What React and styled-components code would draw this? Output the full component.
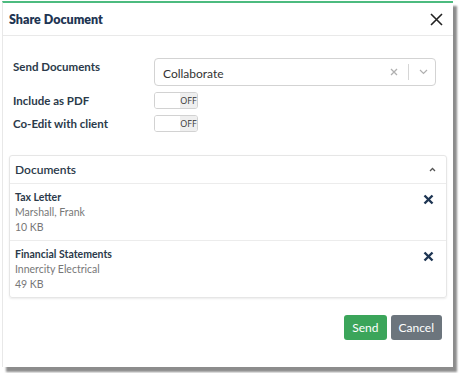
import React from 'react';
import styled, { createGlobalStyle } from 'styled-components';

const GlobalStyle = createGlobalStyle`
  html, body {
    margin: 0;
    padding: 0;
    background: #ffffff;
  }
  body {
    font-family: Lato, "Open Sans", "Liberation Sans", sans-serif;
    color: #2b3a4a;
  }
`;

const Page = styled.div`
  width: 468px;
  height: 373px;
  padding: 1px 0 0 2px;
  box-sizing: border-box;
`;

const Dialog = styled.div`
  width: 451px;
  height: 366px;
  box-sizing: border-box;
  background: #fff;
  border-top: 2px solid #4cbb7f;
  border-left: 1px solid #e8e8e8;
  box-shadow: 4px 5px 2px rgba(0, 0, 0, 0.45);
  display: flex;
  flex-direction: column;
`;

const Header = styled.div`
  height: 32px;
  display: flex;
  align-items: center;
  justify-content: space-between;
  padding: 0 10px 0 6px;
  border-bottom: 1px solid #e9e9e9;
`;

const Title = styled.h1`
  margin: 0;
  font-size: 12.5px;
  font-weight: 800;
  color: #1e3553;
`;

const CloseButton = styled.button`
  border: 0;
  background: none;
  padding: 0;
  width: 14px;
  height: 14px;
  display: flex;
  align-items: center;
  justify-content: center;
  color: #222;
`;

const Body = styled.div`
  flex: 1;
  display: flex;
  flex-direction: column;
  padding: 21px 5px 0 5px;
`;

const Form = styled.div`
  display: grid;
  grid-template-columns: 141px 282px;
  row-gap: 6px;
  padding-left: 5px;
`;

const Label = styled.div`
  font-size: 11.5px;
  font-weight: 700;
  color: #2b3a4a;
  align-self: ${p => (p.$top ? 'start' : 'center')};
  padding-top: ${p => (p.$top ? '3px' : '0')};
`;

const Select = styled.div`
  height: 28px;
  box-sizing: border-box;
  border: 1px solid #d3d3d3;
  border-radius: 4px;
  display: flex;
  align-items: center;
  padding-left: 8px;
  margin-top: 1px;
`;

const SelectValue = styled.span`
  flex: 1;
  font-size: 12px;
  color: #333;
  padding-top: 2px;
`;

const Indicators = styled.div`
  display: flex;
  align-items: center;
  height: 100%;
`;

const ClearIcon = styled.span`
  width: 20px;
  display: flex;
  justify-content: center;
  color: #b0b0b0;
`;

const Divider = styled.span`
  width: 1px;
  height: 16px;
  background: #d6d6d6;
  margin: 0 4px;
`;

const Chevron = styled.span`
  width: 20px;
  display: flex;
  justify-content: center;
  color: #b0b0b0;
  margin-right: 2px;
`;

const Toggle = styled.div`
  width: 44px;
  height: 17px;
  box-sizing: border-box;
  border: 1px solid #d2d2d2;
  border-radius: 3px;
  display: flex;
  overflow: hidden;
`;

const Knob = styled.span`
  width: 25px;
  background: #fff;
`;

const ToggleText = styled.span`
  flex: 1;
  background: #efefef;
  font-size: 9px;
  font-family: "Open Sans", "Liberation Sans", sans-serif;
  color: #333;
  display: flex;
  align-items: center;
  justify-content: center;
`;

const Card = styled.div`
  margin: 23px 1px 0 1px;
  border: 1px solid #e6e6e6;
  border-radius: 3px;
  box-shadow: 0 1px 2px rgba(0, 0, 0, 0.08);
`;

const CardHeader = styled.div`
  height: 27px;
  display: flex;
  align-items: center;
  justify-content: space-between;
  padding: 0 10px 0 5px;
  border-bottom: 1px solid #ececec;
  font-size: 12px;
  font-weight: 600;
  color: #2b3a4a;
`;

const Caret = styled.span`
  display: flex;
  color: #555;
`;

const Item = styled.div`
  display: flex;
  justify-content: space-between;
  padding: 6px 12px 5px 5px;
  border-top: ${p => (p.$first ? 'none' : '1px solid #ececec')};
`;

const ItemText = styled.div`
  display: flex;
  flex-direction: column;
  font-size: 10.5px;
  line-height: 15px;
`;

const ItemName = styled.span`
  font-weight: 700;
  color: #2b3a4a;
`;

const ItemMeta = styled.span`
  color: #777;
`;

const RemoveButton = styled.button`
  border: 0;
  background: none;
  padding: 0;
  margin-top: 4px;
  width: 11px;
  height: 11px;
  display: flex;
  color: #1e3553;
`;

const Footer = styled.div`
  display: flex;
  justify-content: flex-end;
  gap: 4px;
  padding: 17px 6px 0 0;
`;

const Button = styled.button`
  height: 25px;
  border: 0;
  border-radius: 3px;
  padding: 0 8px;
  font-family: Lato, "Open Sans", "Liberation Sans", sans-serif;
  font-size: 12px;
  color: #fff;
  background: ${p => (p.$variant === 'primary' ? '#3ba55a' : '#6c757d')};
`;

const docs = [
  { name: 'Tax Letter', client: 'Marshall, Frank', size: '10 KB' },
  { name: 'Financial Statements', client: 'Innercity Electrical', size: '49 KB' },
];

function OffToggle() {
  return (
    <Toggle>
      <Knob />
      <ToggleText>OFF</ToggleText>
    </Toggle>
  );
}

export default function App() {
  return (
    <Page>
      <GlobalStyle />
      <Dialog>
        <Header>
          <Title>Share Document</Title>
          <CloseButton aria-label="Close">
            <svg width="13" height="13" viewBox="0 0 13 13">
              <path d="M1 1 L12 12 M12 1 L1 12" stroke="currentColor" strokeWidth="1.6" />
            </svg>
          </CloseButton>
        </Header>
        <Body>
          <Form>
            <Label $top>Send Documents</Label>
            <Select>
              <SelectValue>Collaborate</SelectValue>
              <Indicators>
                <ClearIcon>
                  <svg width="8" height="8" viewBox="0 0 8 8">
                    <path d="M1 1 L7 7 M7 1 L1 7" stroke="currentColor" strokeWidth="1.3" />
                  </svg>
                </ClearIcon>
                <Divider />
                <Chevron>
                  <svg width="9" height="6" viewBox="0 0 9 6">
                    <path d="M1 1 L4.5 4.5 L8 1" fill="none" stroke="currentColor" strokeWidth="1.2" />
                  </svg>
                </Chevron>
              </Indicators>
            </Select>
            <Label>Include as PDF</Label>
            <OffToggle />
            <Label>Co-Edit with client</Label>
            <OffToggle />
          </Form>

          <Card>
            <CardHeader>
              Documents
              <Caret>
                <svg width="7" height="5" viewBox="0 0 7 5">
                  <path d="M1 4 L3.5 1.5 L6 4" fill="none" stroke="currentColor" strokeWidth="1.3" />
                </svg>
              </Caret>
            </CardHeader>
            {docs.map((d, i) => (
              <Item key={d.name} $first={i === 0}>
                <ItemText>
                  <ItemName>{d.name}</ItemName>
                  <ItemMeta>{d.client}</ItemMeta>
                  <ItemMeta>{d.size}</ItemMeta>
                </ItemText>
                <RemoveButton aria-label="Remove">
                  <svg width="11" height="11" viewBox="0 0 11 11">
                    <path d="M1.5 1.5 L9.5 9.5 M9.5 1.5 L1.5 9.5" stroke="currentColor" strokeWidth="2.4" />
                  </svg>
                </RemoveButton>
              </Item>
            ))}
          </Card>

          <Footer>
            <Button $variant="primary">Send</Button>
            <Button>Cancel</Button>
          </Footer>
        </Body>
      </Dialog>
    </Page>
  );
}
